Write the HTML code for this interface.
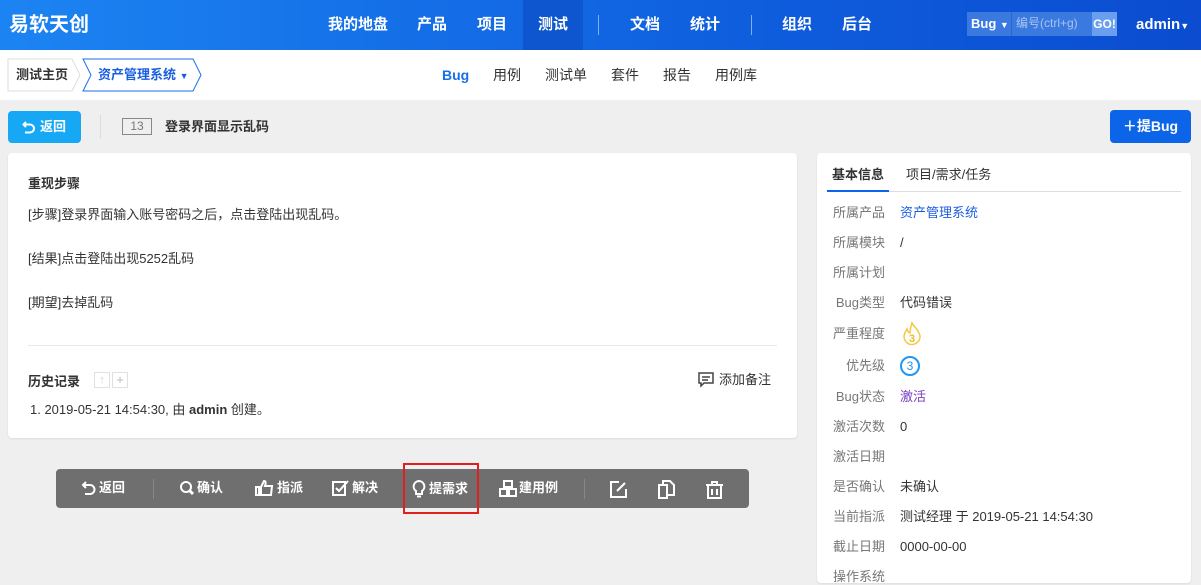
<!DOCTYPE html>
<html><head><meta charset="utf-8"><style>
*{margin:0;padding:0;box-sizing:border-box}
body{width:1201px;height:576px;overflow:hidden;background:#efefef;font-family:"Liberation Sans","Noto Sans CJK SC",sans-serif;font-size:13px;color:#333;position:relative;line-height:1.25}
.a{position:absolute}
.hdr{left:0;top:0;width:1201px;height:50px;background:linear-gradient(90deg,#1c84f2,#0f5fdf 60%,#0b4cd0)}
.n{color:#fff;font-size:15px;font-weight:bold;top:16px}
.card{background:#fff;border-radius:4px;box-shadow:0 1px 2px rgba(0,0,0,.08)}
.lab{color:#777;font-size:13px;width:57px;text-align:right}
.tb{color:#fff;font-size:13px;font-weight:bold;top:480px;display:flex;align-items:center;gap:2px}
.tb svg{fill:none;stroke:#fff;stroke-width:2}
</style></head><body>
<div class="a hdr"></div>
<div class="a" style="left:9px;top:13px;color:#fff;font-size:20px;font-weight:bold">易软天创</div>
<div class="a n" style="left:328px">我的地盘</div>
<div class="a n" style="left:417px">产品</div>
<div class="a n" style="left:477px">项目</div>
<div class="a" style="left:523px;top:0;width:60px;height:50px;background:#0d56cf"></div>
<div class="a n" style="left:538px">测试</div>
<div class="a" style="left:598px;top:15px;width:1px;height:20px;background:#7fb0f0"></div>
<div class="a n" style="left:630px">文档</div>
<div class="a n" style="left:690px">统计</div>
<div class="a" style="left:751px;top:15px;width:1px;height:20px;background:#7fb0f0"></div>
<div class="a n" style="left:782px">组织</div>
<div class="a n" style="left:842px">后台</div>
<div class="a" style="left:967px;top:12px;width:150px;height:24px;background:#3a7ae0"></div>
<div class="a" style="left:971px;top:16px;color:#fff;font-size:13px;font-weight:bold">Bug <span style="font-size:9px">▼</span></div>
<div class="a" style="left:1011px;top:12px;width:1px;height:24px;background:#2a66d0"></div>
<div class="a" style="left:1016px;top:16px;color:#a8c4f0;font-size:12px">编号(ctrl+g)</div>
<div class="a" style="left:1092px;top:12px;width:25px;height:24px;background:#6a9ff0;color:#fff;font-size:12px;font-weight:bold;text-align:center;line-height:24px">GO!</div>
<div class="a" style="left:1136px;top:16px;color:#fff;font-size:15px;font-weight:bold">admin<span style="font-size:9px">▼</span></div>

<div class="a" style="left:0;top:50px;width:1201px;height:50px;background:#fff"></div>
<svg class="a" style="left:7px;top:58px" width="200" height="35"><path d="M1 1H65L73 17 65 33H1Z" fill="#fff" stroke="#ddd"/><path d="M76 1H186L194 17 186 33H76L84 17Z" fill="#fff" stroke="#1a6fe8"/></svg>
<div class="a" style="left:16px;top:67px;font-weight:bold">测试主页</div>
<div class="a" style="left:98px;top:67px;font-weight:bold;color:#1a5ee0">资产管理系统 <span style="font-size:9px">▼</span></div>
<div class="a" style="left:442px;top:67px;font-size:14px;font-weight:bold;color:#1a6fe8">Bug</div>
<div class="a" style="left:493px;top:67px;font-size:14px">用例</div>
<div class="a" style="left:545px;top:67px;font-size:14px">测试单</div>
<div class="a" style="left:611px;top:67px;font-size:14px">套件</div>
<div class="a" style="left:663px;top:67px;font-size:14px">报告</div>
<div class="a" style="left:715px;top:67px;font-size:14px">用例库</div>

<div class="a" style="left:8px;top:111px;width:73px;height:32px;background:#16a8f5;border-radius:4px;color:#fff;font-weight:bold;line-height:32px;padding-left:14px;display:flex;align-items:center;gap:4px"><svg width="14" height="14" viewBox="0 0 14 14" fill="none" stroke="#fff" stroke-width="2"><path d="M4 2L1.5 4.5 4 7M2 4.5H8a4 4 0 010 8H3"/></svg>返回</div>
<div class="a" style="left:100px;top:115px;width:1px;height:24px;background:#ddd"></div>
<div class="a" style="left:122px;top:118px;width:30px;height:17px;border:1px solid #888;color:#777;font-size:12px;text-align:center;line-height:15px">13</div>
<div class="a" style="left:165px;top:119px;font-weight:bold">登录界面显示乱码</div>
<div class="a" style="left:1110px;top:110px;width:81px;height:33px;background:#0c65e8;border-radius:4px;color:#fff;font-size:14px;font-weight:bold;line-height:33px;text-align:center">＋提Bug</div>

<div class="a card" style="left:8px;top:153px;width:789px;height:285px"></div>
<div class="a" style="left:28px;top:176px;font-weight:bold">重现步骤</div>
<div class="a" style="left:28px;top:207px">[步骤]登录界面输入账号密码之后，点击登陆出现乱码。</div>
<div class="a" style="left:28px;top:251px">[结果]点击登陆出现5252乱码</div>
<div class="a" style="left:28px;top:295px">[期望]去掉乱码</div>
<div class="a" style="left:28px;top:345px;width:749px;height:1px;background:#e8e8e8"></div>
<div class="a" style="left:28px;top:374px;font-weight:bold">历史记录</div>
<div class="a" style="left:94px;top:372px;width:16px;height:16px;border:1px solid #e0e0e0;color:#ccc;font-size:11px;text-align:center;line-height:14px">↑</div>
<div class="a" style="left:112px;top:372px;width:16px;height:16px;border:1px solid #e0e0e0;color:#bbb;font-size:13px;text-align:center;line-height:14px">+</div>
<svg class="a" style="left:698px;top:372px" width="16" height="16" fill="none" stroke="#444" stroke-width="1.5"><path d="M1 1H15V11H6L3 14V11H1Z"/><path d="M4 5H12M4 8H10"/></svg>
<div class="a" style="left:719px;top:372px">添加备注</div>
<div class="a" style="left:30px;top:402px">1. 2019-05-21 14:54:30, 由 <b>admin</b> 创建。</div>

<div class="a" style="left:56px;top:469px;width:693px;height:39px;background:#6f6f6f;border-radius:4px"></div>
<div class="a tb" style="left:81px"><svg width="16" height="16" viewBox="0 0 16 16"><path d="M5 2L2 5 5 8M2 5H9a4.5 4.5 0 010 9H4"/></svg>返回</div>
<div class="a" style="left:153px;top:479px;width:1px;height:20px;background:#888"></div>
<div class="a tb" style="left:179px"><svg width="16" height="16" viewBox="0 0 16 16"><circle cx="7" cy="7" r="5"/><path d="M10.5 10.5L14 14" stroke-width="3"/></svg>确认</div>
<div class="a tb" style="left:255px"><svg width="20" height="16" viewBox="0 0 20 16"><path d="M1 7H4V15H1ZM6 7L9 1C11 1 11 3 10 6H17L16 15H6Z"/></svg>指派</div>
<div class="a tb" style="left:332px"><svg width="18" height="17" viewBox="0 0 18 17"><path d="M1 2H13V15H1Z"/><path d="M4 8L7 11 16 1"/></svg>解决</div>
<div class="a tb" style="left:411px"><svg width="16" height="18" viewBox="0 0 16 18"><path d="M8 1a5.5 5.5 0 00-3 10V14H11V11A5.5 5.5 0 008 1ZM6 16.5H10"/></svg>提需求</div>
<div class="a tb" style="left:499px"><svg width="18" height="17" viewBox="0 0 18 17"><path d="M5 1H13V7H5ZM1 9H8V16H1ZM10 9H17V16H10Z"/></svg>建用例</div>
<div class="a" style="left:584px;top:479px;width:1px;height:20px;background:#888"></div>
<div class="a tb" style="left:609px"><svg width="19" height="19" viewBox="0 0 19 19"><path d="M10 2H2V17H17V9"/><path d="M8 11L16 3"/></svg></div>
<div class="a tb" style="left:657px"><svg width="19" height="19" viewBox="0 0 19 19"><path d="M2 5H10V18H2ZM6 5V1H13L17 5V15H10"/></svg></div>
<div class="a tb" style="left:705px"><svg width="19" height="19" viewBox="0 0 19 19"><path d="M1 5H18M7 5V2H12V5M3 5V18H16V5M7 9V15M12 9V15"/></svg></div>
<div class="a" style="left:403px;top:463px;width:76px;height:51px;border:2px solid #e02020"></div>

<div class="a card" style="left:817px;top:153px;width:374px;height:430px"></div>
<div class="a" style="left:832px;top:167px;font-weight:bold">基本信息</div>
<div class="a" style="left:906px;top:167px">项目/需求/任务</div>
<div class="a" style="left:827px;top:191px;width:354px;height:1px;background:#ddd"></div>
<div class="a" style="left:827px;top:190px;width:62px;height:2px;background:#0c65e8"></div>
<div class="a lab" style="left:828px;top:205px">所属产品</div><div class="a" style="left:900px;top:205px;color:#1a5ee0">资产管理系统</div>
<div class="a lab" style="left:828px;top:235px">所属模块</div><div class="a" style="left:900px;top:235px">/</div>
<div class="a lab" style="left:828px;top:265px">所属计划</div>
<div class="a lab" style="left:828px;top:295px">Bug类型</div><div class="a" style="left:900px;top:295px">代码错误</div>
<div class="a lab" style="left:828px;top:326px">严重程度</div>
<svg class="a" style="left:900px;top:321px" width="24" height="26" viewBox="0 0 24 26" fill="none" stroke="#f5c842" stroke-width="1.5"><path d="M12 2C14 6 19 9 20 15A8 8 0 014 16C4 12 6 10 7 8C8 11 9 12 10 12C10 8 11 5 12 2Z"/><text x="12" y="21" font-size="11" font-weight="bold" fill="#f0b820" stroke="none" text-anchor="middle" font-family="Liberation Sans">3</text></svg>
<div class="a lab" style="left:828px;top:358px">优先级</div><div class="a" style="left:900px;top:356px;width:20px;height:20px;border:2px solid #2196f3;border-radius:50%;color:#2196f3;font-size:12px;text-align:center;line-height:16px">3</div>
<div class="a lab" style="left:828px;top:389px">Bug状态</div><div class="a" style="left:900px;top:389px;color:#7b3fc0">激活</div>
<div class="a lab" style="left:828px;top:419px">激活次数</div><div class="a" style="left:900px;top:419px">0</div>
<div class="a lab" style="left:828px;top:449px">激活日期</div>
<div class="a lab" style="left:828px;top:479px">是否确认</div><div class="a" style="left:900px;top:479px">未确认</div>
<div class="a lab" style="left:828px;top:509px">当前指派</div><div class="a" style="left:900px;top:509px">测试经理 于 2019-05-21 14:54:30</div>
<div class="a lab" style="left:828px;top:539px">截止日期</div><div class="a" style="left:900px;top:539px">0000-00-00</div>
<div class="a lab" style="left:828px;top:569px">操作系统</div>
</body></html>
